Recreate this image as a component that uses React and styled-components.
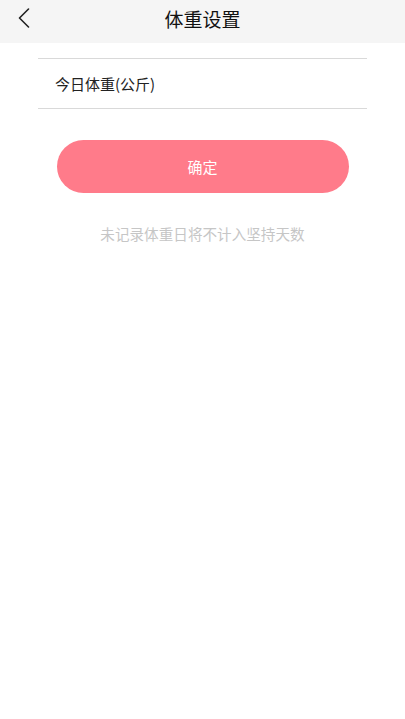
import React from "react";
import styled, { createGlobalStyle } from "styled-components";

const Global = createGlobalStyle`
  html, body { margin: 0; padding: 0; background: #fff; }
  body { font-family: "Noto Sans CJK SC", "Noto Sans", sans-serif; }
  * { box-sizing: border-box; }
`;

const Page = styled.div`
  width: 405px;
  min-height: 719px;
  background: #fff;
  display: flex;
  flex-direction: column;
`;

const Header = styled.header`
  height: 43px;
  background: #f5f5f5;
  display: flex;
  align-items: center;
  justify-content: center;
  position: relative;
`;

const Back = styled.button`
  position: absolute;
  left: 11px;
  top: 5px;
  width: 26px;
  height: 26px;
  padding: 0;
  border: 0;
  background: transparent;
  display: flex;
  align-items: center;
  justify-content: center;
`;

const Title = styled.h1`
  margin: 0;
  margin-top: -6px;
  font-size: 19px;
  font-weight: 400;
  color: #111;
`;

const Body = styled.main`
  display: flex;
  flex-direction: column;
  align-items: center;
  padding-top: 15px;
`;

const Field = styled.div`
  width: 329px;
  height: 51px;
  border-top: 1.5px solid #d9d9d9;
  border-bottom: 1.5px solid #d9d9d9;
  display: flex;
  align-items: center;
  padding-left: 17px;
  font-size: 15px;
  color: #222;
`;

const Confirm = styled.button`
  margin-top: 31px;
  width: 292px;
  height: 53px;
  border: 0;
  border-radius: 27px;
  background: #ff7b8a;
  color: #fff;
  font-family: inherit;
  font-size: 15px;
  display: flex;
  align-items: center;
  justify-content: center;
`;

const Hint = styled.p`
  margin: 30px 0 0;
  font-size: 14.6px;
  color: #c6c6c6;
`;

export default function App() {
  return (
    <Page>
      <Global />
      <Header>
        <Back aria-label="返回">
          <svg width="14" height="20" viewBox="0 0 14 20" fill="none">
            <path d="M11.5 1 L2.5 10 L11.5 19" stroke="#222" strokeWidth="1.6" strokeLinecap="round" strokeLinejoin="round" />
          </svg>
        </Back>
        <Title>体重设置</Title>
      </Header>
      <Body>
        <Field>今日体重(公斤)</Field>
        <Confirm>确定</Confirm>
        <Hint>未记录体重日将不计入坚持天数</Hint>
      </Body>
    </Page>
  );
}
